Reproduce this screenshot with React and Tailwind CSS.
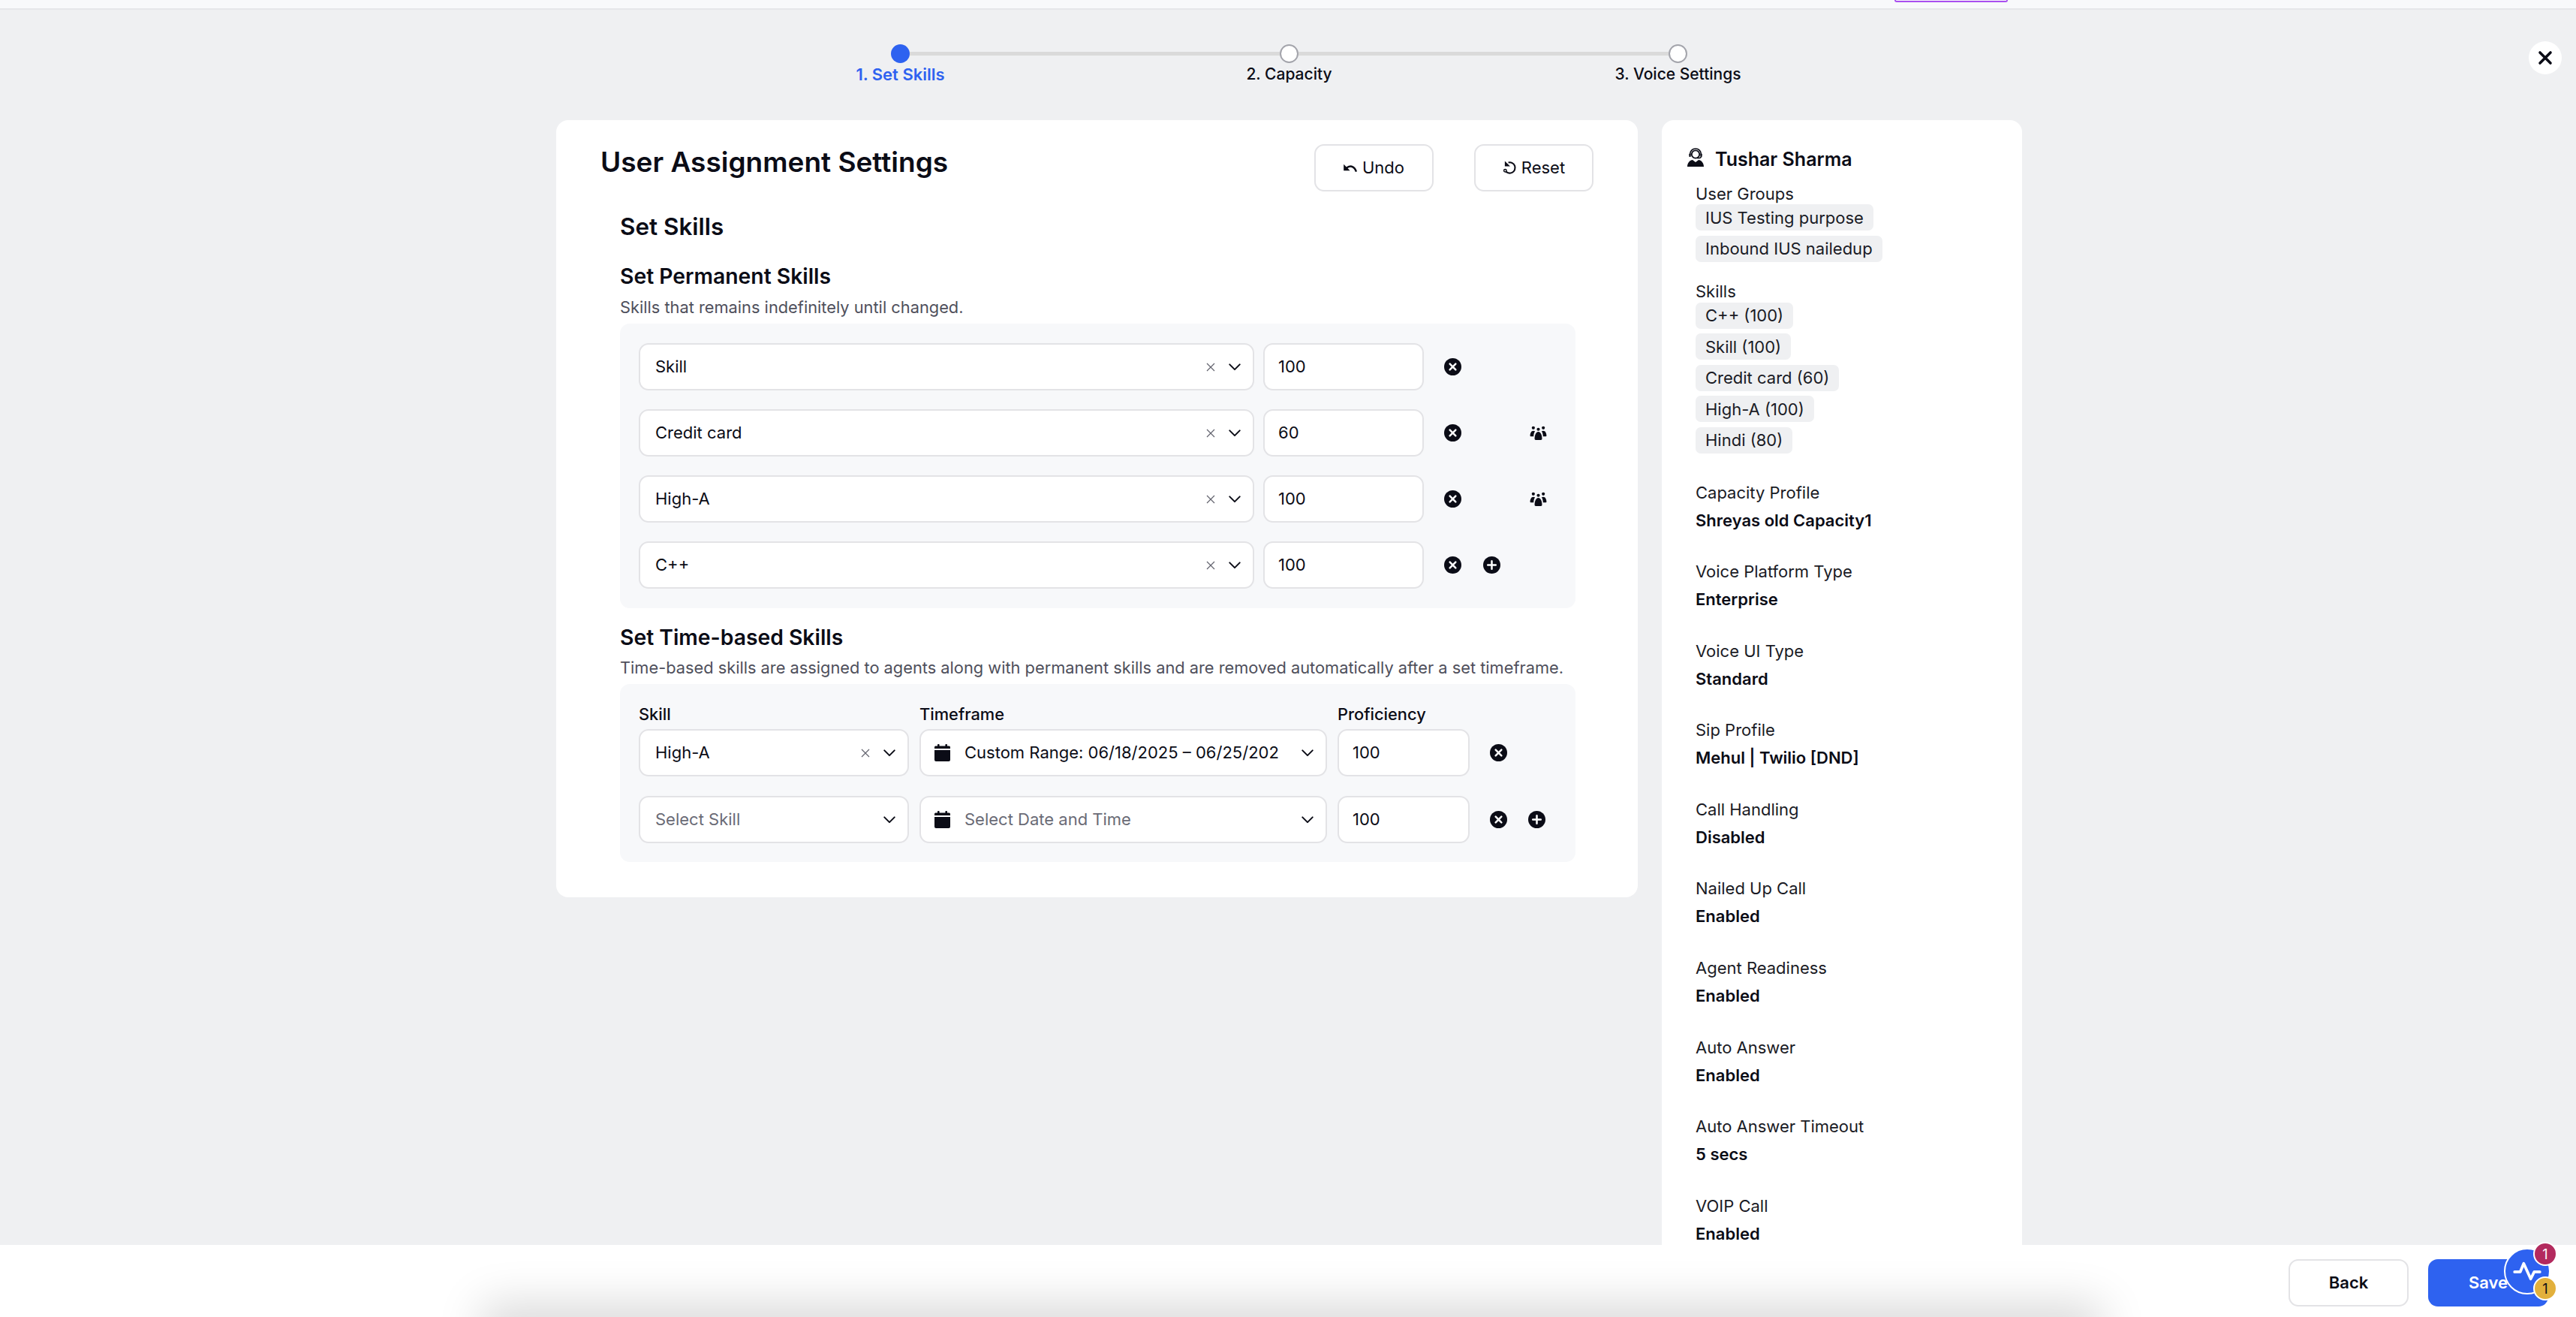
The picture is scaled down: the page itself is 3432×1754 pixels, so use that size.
const F = { fontFamily: 'Inter, "Noto Sans", sans-serif' };

function CircleX({ plus }) {
  return (
    <svg viewBox="0 0 24 24" className="w-[23px] h-[23px] shrink-0">
      <circle cx="12" cy="12" r="12" fill="#0b0c16" />
      {plus ? (
        <path d="M12 6.500v11M6.500 12h11" stroke="#fff" strokeWidth="2.600" strokeLinecap="round" />
      ) : (
        <path d="M8 8l8 8M16 8l-8 8" stroke="#fff" strokeWidth="2.600" strokeLinecap="round" />
      )}
    </svg>
  );
}

function People() {
  return (
    <svg viewBox="0 0 24 20" className="w-[23px] h-[19px] shrink-0" fill="#0b0c16">
      <circle cx="5" cy="3" r="2.200" />
      <circle cx="12" cy="5" r="2.200" />
      <circle cx="19" cy="3" r="2.200" />
      <path d="M0.500 14c0-4 1.800-7 4.500-7 1 0 1.800.4 2.400 1C6 9.800 5.400 12 5.400 15H2c-1 0-1.500-.4-1.500-1z" />
      <path d="M23.500 14c0-4-1.800-7-4.500-7-1 0-1.800.4-2.400 1 1.400 1.800 2 4 2 7H22c1 0 1.500-.4 1.500-1z" />
      <path d="M6.800 18.500c0-5.500 2-10 5.200-10s5.200 4.500 5.200 10c0 .9-.6 1.500-1.500 1.500H8.300c-.9 0-1.500-.6-1.500-1.500z" />
    </svg>
  );
}

function Chevron() {
  return (
    <svg viewBox="0 0 20 12" className="w-[18px] h-[11px] shrink-0" fill="none" stroke="#0b0c16" strokeWidth="2.200" strokeLinecap="round" strokeLinejoin="round">
      <path d="M2.500 2.500L10 10l7.500-7.500" />
    </svg>
  );
}

function ClearX() {
  return (
    <svg viewBox="0 0 12 12" className="w-[12px] h-[12px] shrink-0" fill="none" stroke="#62636e" strokeWidth="1.200">
      <path d="M1 1l10 10M11 1L1 11" />
    </svg>
  );
}

function Calendar() {
  return (
    <svg viewBox="0 0 21 23" className="w-[21px] h-[23px] shrink-0" fill="#0b0c16">
      <rect x="4" y="0" width="2.600" height="4" rx="1" />
      <rect x="14.400" y="0" width="2.600" height="4" rx="1" />
      <path d="M1.500 2.500h18a1.500 1.500 0 0 1 1.500 1.500v2H0V4a1.500 1.500 0 0 1 1.500-1.500z" />
      <path d="M0 8h21v13a2 2 0 0 1-2 2H2a2 2 0 0 1-2-2z" />
    </svg>
  );
}

function Field({ value, clear, placeholder, widthClass }) {
  return (
    <div className={`${widthClass} h-[63px] shrink-0 bg-white border-2 border-[#e3e3e6] rounded-[13px] flex items-center pl-[20px] pr-[15px] text-[22px]`}>
      <span className={`flex-1 ${placeholder ? "text-[#6a6b76]" : "text-[#0b0c16]"}`}>{value}</span>
      {clear && <span className="mr-[17px] flex"><ClearX /></span>}
      <Chevron />
    </div>
  );
}

function NumInput({ value, widthClass }) {
  return (
    <div className={`${widthClass} h-[63px] shrink-0 bg-white border-2 border-[#e3e3e6] rounded-[13px] flex items-center pl-[18px] text-[22px] text-[#0b0c16]`}>
      {value}
    </div>
  );
}

function DateField({ value, placeholder }) {
  return (
    <div className="w-[543px] h-[63px] shrink-0 bg-white border-2 border-[#e3e3e6] rounded-[13px] flex items-center pl-[18px] pr-[15px] text-[22px]">
      <Calendar />
      <span className={`flex-1 min-w-0 ml-[19px] whitespace-nowrap ${placeholder ? "text-[#6a6b76]" : "text-[#0b0c16]"}`}>{value}</span>
      <span className="ml-[8px] flex"><Chevron /></span>
    </div>
  );
}

function PermRow({ value, num, people, plus }) {
  return (
    <div className="flex items-center">
      <Field widthClass="w-[820px]" value={value} clear />
      <div className="ml-[12px]"><NumInput widthClass="w-[214px]" value={num} /></div>
      <div className="ml-[27px] flex"><CircleX /></div>
      <div className="w-[29px] shrink-0" />
      <div className="w-[23px] flex shrink-0">{plus && <CircleX plus />}</div>
      <div className="ml-[39px] w-[23px] flex">{people && <People />}</div>
    </div>
  );
}

function TimeRow({ value, date, clear, placeholder, datePlaceholder, plus }) {
  return (
    <div className="flex items-center gap-[14px]">
      <Field widthClass="w-[360px]" value={value} clear={clear} placeholder={placeholder} />
      <DateField value={date} placeholder={datePlaceholder} />
      <NumInput widthClass="w-[176px]" value="100" />
      <div className="ml-[13px] flex"><CircleX /></div>
      <div className="ml-[14px] flex w-[23px]">{plus && <CircleX plus />}</div>
    </div>
  );
}

function Chip({ children }) {
  return (
    <div className="w-fit h-[35px] flex items-center px-[13px] bg-[#eff0f2] rounded-[7px] text-[22px] leading-none text-[#1a1b25]">
      {children}
    </div>
  );
}

function Info({ label, value, first }) {
  return (
    <div className={`${first ? "mt-[38px]" : "mt-[40.6px]"} h-[65px] flex flex-col justify-between`}>
      <div className="text-[22px] leading-[28px] text-[#1a1b25]">{label}</div>
      <div className="text-[22px] leading-[28px] font-semibold text-[#0b0c16]">{value}</div>
    </div>
  );
}

function Step({ label, active, first, last }) {
  return (
    <div className="w-[518px] flex flex-col items-center">
      <div className="w-full flex items-center">
        <div className={`flex-1 h-[5px] ${first ? "" : "bg-[#dadada]"}`} />
        <div className={`w-[25px] h-[25px] rounded-full shrink-0 ${active ? "bg-[#2e62f0]" : "bg-white border-2 border-[#a3a4ab]"}`} />
        <div className={`flex-1 h-[5px] ${last ? "" : "bg-[#dadada]"}`} />
      </div>
      <div className={`mt-[1px] leading-[28px] ${active ? "text-[22px] font-semibold text-[#2e62f0]" : "text-[21px] font-medium text-[#0b0c16]"}`}>{label}</div>
    </div>
  );
}

function OutlineBtn({ icon, children }) {
  return (
    <div className="w-[159px] h-[63px] bg-white border-2 border-[#e3e3e6] rounded-[13px] flex items-center justify-center gap-[6px] text-[22px] text-[#0b0c16]">
      {icon}
      {children}
    </div>
  );
}

export default function App() {
  return (
    <div style={F} className="relative w-[3432px] h-[1754px] overflow-hidden bg-[#eff0f2] flex flex-col text-[#0b0c16]">
      <div className="h-[13px] shrink-0 bg-[#f8f9fb] border-b-2 border-[#e6e7ea] flex justify-end pr-[757px]">
        <div className="w-[151px] h-[3px] border-2 border-t-0 border-[#a94ff0] rounded-b-[6px]" />
      </div>

      <main className="flex-1 min-h-0 overflow-hidden flex flex-col items-center pl-[3px]">
        <div className="flex pt-[46px] h-[147px] shrink-0">
          <Step label="1. Set Skills" active first />
          <Step label="2. Capacity" />
          <Step label="3. Voice Settings" last />
        </div>

        <div className="flex items-start gap-[32px]">
          <section className="w-[1441px] h-[1035px] bg-white rounded-[16px] pt-[32px] pl-[59px]">
            <div className="flex items-start">
              <h1 className="w-[951px] text-[37px] leading-[48px] font-semibold">User Assignment Settings</h1>
              <div className="flex gap-[54px]">
                <OutlineBtn icon={
                  <svg viewBox="0 0 20 14" className="w-[19px] h-[13px]" fill="none">
                    <path d="M0 2v9h9z" fill="#0b0c16" />
                    <path d="M4 7.500C8 3.500 15 3.500 18 12.500" stroke="#0b0c16" strokeWidth="2.600" />
                  </svg>
                }>Undo</OutlineBtn>
                <OutlineBtn icon={
                  <svg viewBox="0 0 20 20" className="w-[19px] h-[19px]" fill="none">
                    <path d="M8 2.700A7.500 7.500 0 1 1 3.500 13.800" stroke="#0b0c16" strokeWidth="2.200" />
                    <path d="M3 0.500v7.500h7.500z" fill="#0b0c16" />
                    <circle cx="3.500" cy="14" r="1.800" fill="#fff" stroke="#0b0c16" strokeWidth="1.600" />
                  </svg>
                }>Reset</OutlineBtn>
              </div>
            </div>

            <div className="pl-[26px]">
              <h2 className="mt-[29px] text-[31.400px] leading-[36px] font-semibold">Set Skills</h2>
              <h3 className="mt-[32px] text-[28.300px] leading-[32px] font-semibold">Set Permanent Skills</h3>
              <p className="mt-[11px] text-[21.800px] leading-[28px] text-[#4f505c]">Skills that remains indefinitely until changed.</p>
              <div className="mt-[8px] w-[1273px] h-[379px] bg-[#f7f8fa] rounded-[13px] px-[25px] py-[26px] flex flex-col gap-[25px]">
                <PermRow value="Skill" num="100" />
                <PermRow value="Credit card" num="60" people />
                <PermRow value="High-A" num="100" people />
                <PermRow value="C++" num="100" plus />
              </div>
              <h3 className="mt-[23px] text-[28.300px] leading-[32px] font-semibold">Set Time-based Skills</h3>
              <p className="mt-[10px] text-[21.800px] leading-[28px] text-[#4f505c]">Time-based skills are assigned to agents along with permanent skills and are removed automatically after a set timeframe.</p>
              <div className="mt-[8px] w-[1273px] h-[237px] bg-[#f7f8fa] rounded-[13px] px-[25px] pt-[26px]">
                <div className="flex gap-[14px] h-[34px] text-[21.800px] leading-[28px] font-medium">
                  <div className="w-[360px]">Skill</div>
                  <div className="w-[543px]">Timeframe</div>
                  <div>Proficiency</div>
                </div>
                <div className="flex flex-col gap-[26px]">
                  <TimeRow value="High-A" clear date="Custom Range: 06/18/2025 – 06/25/202" />
                  <TimeRow value="Select Skill" placeholder date="Select Date and Time" datePlaceholder plus />
                </div>
              </div>
            </div>
          </section>

          <aside className="w-[480px] shrink-0 h-[1600px] bg-white rounded-[16px] pt-[36px] pl-[34px]">
            <div className="flex items-center h-[32px] gap-[15px]">
              <svg viewBox="0 0 22 25" className="w-[22px] h-[25px] shrink-0 mb-[6px]" fill="#0b0c16">
                <circle cx="11" cy="8.500" r="5.200" fill="none" stroke="#0b0c16" strokeWidth="1.800" />
                <path d="M3.500 9C3.500 4 7 1 11 1s7.500 3 7.500 8" fill="none" stroke="#0b0c16" strokeWidth="1.600" />
                <rect x="2.300" y="7.500" width="2.400" height="4.500" rx="1" />
                <rect x="17.300" y="7.500" width="2.400" height="4.500" rx="1" />
                <path d="M18.500 11.500c0 1.500-2 2.500-5.500 2" fill="none" stroke="#0b0c16" strokeWidth="1.400" />
                <path d="M0 25c0-5 3.500-9 7-9l4 3 4-3c3.500 0 7 4 7 9z" />
              </svg>
              <div className="text-[25px] font-semibold leading-[32px]">Tushar Sharma</div>
            </div>
            <div className="pl-[11px]">
              <div className="mt-[16px] text-[22px] leading-[28px] text-[#1a1b25]">User Groups</div>
              <div className="flex flex-col gap-[6.500px]">
                <Chip>IUS Testing purpose</Chip>
                <Chip>Inbound IUS nailedup</Chip>
              </div>
              <div className="mt-[25px] text-[22px] leading-[28px] text-[#1a1b25]">Skills</div>
              <div className="mt-[1px] flex flex-col gap-[6.500px]">
                <Chip>C++ (100)</Chip>
                <Chip>Skill (100)</Chip>
                <Chip>Credit card (60)</Chip>
                <Chip>High-A (100)</Chip>
                <Chip>Hindi (80)</Chip>
              </div>
              <Info first label="Capacity Profile" value="Shreyas old Capacity1" />
              <Info label="Voice Platform Type" value="Enterprise" />
              <Info label="Voice UI Type" value="Standard" />
              <Info label="Sip Profile" value="Mehul | Twilio [DND]" />
              <Info label="Call Handling" value="Disabled" />
              <Info label="Nailed Up Call" value="Enabled" />
              <Info label="Agent Readiness" value="Enabled" />
              <Info label="Auto Answer" value="Enabled" />
              <Info label="Auto Answer Timeout" value="5 secs" />
              <Info label="VOIP Call" value="Enabled" />
            </div>
          </aside>
        </div>
      </main>

      <footer className="relative h-[96px] shrink-0 bg-white overflow-hidden flex items-start justify-end gap-[26px] pt-[19px] pr-[37px]">
        <div className="absolute left-[660px] top-[96px] w-[2122px] h-[40px] shadow-[0_0_60px_18px_rgba(0,0,0,0.15)]" />
        <div className="w-[160px] h-[63px] bg-white border-2 border-[#e3e3e6] rounded-[13px] flex items-center justify-center text-[22px] font-semibold">Back</div>
        <div className="w-[160px] h-[63px] bg-[#2e62f0] rounded-[13px] flex items-center justify-center text-[22px] font-semibold text-white">Save</div>
      </footer>

      <div className="absolute left-[3369px] top-[55px] w-[44px] h-[44px] rounded-full bg-white flex items-center justify-center">
        <svg viewBox="0 0 20 20" className="w-[20px] h-[20px]" fill="none" stroke="#0b0c16" strokeWidth="3.600" strokeLinecap="round"><path d="M3 3l14 14M17 3L3 17" /></svg>
      </div>

      <div className="absolute left-[3336px] top-[1662px] w-[62px] h-[62px] rounded-full bg-[#2e62f0] border-2 border-white flex items-center justify-center">
        <svg viewBox="0 0 40 30" className="w-[38px] h-[28px]" fill="none" stroke="#fff" strokeWidth="4" strokeLinecap="round" strokeLinejoin="round"><path d="M2 16h8l5-12 10 22 5-10h8" /></svg>
      </div>
      <div className="absolute left-[3375px] top-[1654px] w-[32px] h-[32px] rounded-full bg-[#b32a5e] border-2 border-white flex items-center justify-center text-[18px] text-white">1</div>
      <div className="absolute left-[3375px] top-[1700px] w-[32px] h-[32px] rounded-full bg-[#e2b03c] border-2 border-white flex items-center justify-center text-[18px] text-[#0b0c16]">1</div>
    </div>
  );
}
